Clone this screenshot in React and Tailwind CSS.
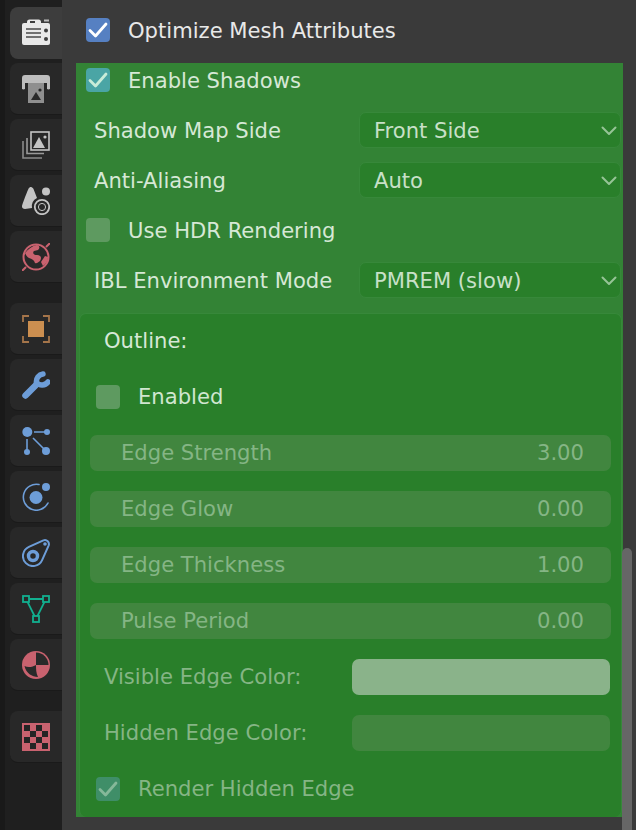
const ICON_GRAY = "#c4c4c4";
const BLUE = "#6d9dd8";
const RED = "#c9626f";

function Tab({ active, children, className = "" }) {
  return (
    <div className={`w-[52px] h-[52px] shrink-0 rounded-l-[8px] flex items-center pl-[12px] ${active ? "bg-[#3d3d3d]" : "bg-[#282828] border-b border-[#1a1a1a]"} ${className}`}>
      <svg width="28" height="28" viewBox="0 0 28 28" fill="none">{children}</svg>
    </div>
  );
}

function Check({ color, tick = "#ffffff" }) {
  return (
    <div className="w-[24px] h-[24px] rounded-[4px] shrink-0" style={{ backgroundColor: color }}>
      {tick && (
        <svg width="24" height="24" viewBox="0 0 24 24" fill="none">
          <path d="M4 12.500l5.500 5.500L20 6" stroke={tick} strokeWidth="2.800" strokeLinecap="round" strokeLinejoin="round" />
        </svg>
      )}
    </div>
  );
}

function Select({ label }) {
  return (
    <div className="w-[262px] h-[36px] rounded-[7px] bg-[#297f2a] border border-[#37883a] flex items-center justify-between pl-[14px] pr-[3px] text-[#c8e0c8]">
      <span className="pt-[1px]">{label}</span>
      <svg width="16" height="16" viewBox="0 0 16 16" fill="none">
        <path d="M1.500 5.500L8 12l6.500-6.500" stroke="#96c496" strokeWidth="2" strokeLinecap="round" strokeLinejoin="round" />
      </svg>
    </div>
  );
}

function Prop({ label, value }) {
  return (
    <div className="flex items-center h-[36px] pl-[18px] pr-[2px] justify-between">
      <span className="text-[#d6e8d6] pt-[1px]">{label}</span>
      <Select label={value} />
    </div>
  );
}

function NumField({ label, value }) {
  return (
    <div className="h-[36px] mx-[10px] rounded-[7px] bg-[#41863f] flex items-center justify-between pl-[31px] pr-[27px] text-[#85b585]">
      <span>{label}</span>
      <span>{value}</span>
    </div>
  );
}

function ColorRow({ label, swatch }) {
  return (
    <div className="h-[36px] flex items-center justify-between pl-[24px] pr-[11px]">
      <span className="text-[#85b585]">{label}</span>
      <div className={`w-[258px] h-[36px] rounded-[7px] ${swatch}`} />
    </div>
  );
}

export default function App() {
  return (
    <div className="w-[636px] h-[830px] flex overflow-hidden bg-[#3a3a3a] text-[21.12px] leading-none" style={{ fontFamily: '"DejaVu Sans", sans-serif' }}>
      <div className="w-[62px] shrink-0 h-full bg-[#1f1f1f] border-l-[5px] border-[#191919] pl-[5px] pt-[7px] flex flex-col gap-[4px]">
        <Tab active>
          <rect x="0" y="4" width="28" height="22" rx="2" fill="#e8e8e8" />
          <rect x="5" y="0.5" width="14" height="6" rx="2.5" fill="#e8e8e8" />
          <rect x="22" y="0.5" width="5" height="2" fill="#bbbbbb" />
          <rect x="8" y="2" width="5" height="2" fill="#3d3d3d" />
          <rect x="4" y="9" width="15" height="2" fill="#707070" />
          <rect x="4" y="13" width="15" height="2" fill="#707070" />
          <rect x="4" y="17" width="15" height="2" fill="#707070" />
          <circle cx="24" cy="11.5" r="2" fill="#3d3d3d" />
          <circle cx="24" cy="20" r="2" fill="#3d3d3d" />
        </Tab>
        <Tab>
          <path d="M3 0h22a3 3 0 0 1 3 3v11a3 3 0 0 1-3 0v-6H3v6a3 3 0 0 1-3 0V3a3 3 0 0 1 3-3z" fill="#bdbdbd" />
          <rect x="6" y="8" width="16" height="20" fill="#8f8f8f" />
          <path d="M9 25l5-8 5 8z" fill="#2a2a2a" />
          <circle cx="18" cy="15" r="1.6" fill="#2a2a2a" />
        </Tab>
        <Tab>
          <rect x="9" y="1" width="18" height="18" stroke={ICON_GRAY} strokeWidth="1.6" />
          <path d="M11 17l6-11 6 11z" fill={ICON_GRAY} />
          <circle cx="23" cy="6" r="1.6" fill={ICON_GRAY} />
          <path d="M5 7v15.500h17" stroke="#9a9a9a" strokeWidth="1.6" />
          <path d="M1 10v17h19" stroke="#8a8a8a" strokeWidth="1.6" />
        </Tab>
        <Tab>
          <path d="M9 0C10 0 11 1 11.500 2l3.500 9A9.500 9.500 0 0 0 10 21L3 22C1 22 0 21 0 19.500 0 18 6 2 7 1 7.500.5 8 0 9 0z" fill={ICON_GRAY} />
          <circle cx="24" cy="4.500" r="4" fill={ICON_GRAY} />
          <circle cx="20" cy="20" r="7.200" stroke={ICON_GRAY} strokeWidth="1.800" />
          <circle cx="20" cy="20" r="3.600" stroke={ICON_GRAY} strokeWidth="1" />
        </Tab>
        <Tab>
          <circle cx="14" cy="14" r="12.500" stroke={RED} strokeWidth="2" />
          <path d="M3 10c3-4 7-7 12-8 3 1 3 3 1 5l-4 1c-2 2 0 4 3 4 4 0 5 3 3 6-2 1-3 3-5 2-1-3-3-4-6-5-2-1-3-3-4-5z" fill={RED} />
          <path d="M19 19l4-6 3 1c0 4-2 7-5 9z" fill={RED} />
          <path d="M0 28l4-4M24 4l4-4" stroke={RED} strokeWidth="2" />
        </Tab>
        <Tab className="mt-[16px]">
          <rect x="6" y="6" width="16" height="16" fill="#cc8f50" />
          <path d="M1 7V1h6M21 1h6v6M27 21v6h-6M7 27H1v-6" stroke="#a5754a" strokeWidth="1.800" />
        </Tab>
        <Tab>
          <path d="M3.500 24.500L15 13" stroke={BLUE} strokeWidth="6.500" strokeLinecap="round" />
          <path d="M14.500 11.500A7.500 7.500 0 0 1 21 3M14.500 11.500A7.500 7.500 0 0 0 26 11" stroke={BLUE} strokeWidth="5.500" strokeLinecap="round" />
        </Tab>
        <Tab>
          <circle cx="5.300" cy="5" r="5" fill={BLUE} />
          <circle cx="25" cy="5" r="3" fill={BLUE} />
          <circle cx="5" cy="25" r="3" fill={BLUE} />
          <circle cx="24" cy="24" r="4" fill={BLUE} />
          <path d="M12 5h11M5 12v11M11 11l11 11" stroke={BLUE} strokeWidth="1.600" />
        </Tab>
        <Tab>
          <circle cx="14" cy="14.500" r="6.500" fill={BLUE} />
          <circle cx="24" cy="4" r="4" fill={BLUE} />
          <path d="M17 1.500A13 13 0 1 0 26 20" stroke={BLUE} strokeWidth="1.600" strokeLinecap="round" />
        </Tab>
        <Tab>
          <path d="M6.900 7.900L21.400 1.400A4 4 0 0 1 26.600 6.600L20.100 21.100A10 10 0 1 1 6.900 7.900Z" stroke={BLUE} strokeWidth="2" />
          <circle cx="11" cy="17" r="4.500" stroke={BLUE} strokeWidth="3.500" />
          <circle cx="23" cy="5" r="1.800" fill={BLUE} />
        </Tab>
        <Tab>
          <path d="M4 4h20L14 24z" stroke="#12b090" strokeWidth="1.800" />
          <rect x="1" y="1" width="6" height="6" fill="#282828" stroke="#12b090" strokeWidth="1.800" />
          <rect x="21" y="1" width="6" height="6" fill="#282828" stroke="#12b090" strokeWidth="1.800" />
          <rect x="11" y="21" width="6" height="6" fill="#282828" stroke="#12b090" strokeWidth="1.800" />
        </Tab>
        <Tab>
          <circle cx="14" cy="14" r="14" fill={RED} />
          <path d="M14 1.500A12.500 12.500 0 0 1 26.500 14L14 14z" fill="#2a2a2a" />
          <path d="M2.500 15C6 17 11 16 14 14C14 18 14 22 16 26C10 26 4 22 2.500 15z" fill="#2a2a2a" />
        </Tab>
        <Tab className="mt-[16px]">
          <rect x="0" y="0" width="28" height="28" fill={RED} />
          <path d="M2 2h6v6H2zM14 2h6v6h-6zM8 8h6v6H8zM20 8h6v6h-6zM2 14h6v6H2zM14 14h6v6h-6zM8 20h6v6H8zM20 20h6v6h-6z" fill="#242424" />
        </Tab>
      </div>

      <div className="relative flex-1 pl-[14px] pt-[5px]">
        <div className="h-[50px] flex items-center pl-[10px] gap-[18px] text-[#e8e8e8]">
          <Check color="#5680c2" />
          <span className="pt-[1px]">Optimize Mesh Attributes</span>
        </div>
        <div className="mt-[8px] w-[547px] h-[754px] bg-[#338335]">
          <div className="h-[34px] flex items-center pl-[10px] gap-[18px] mb-[15px] text-[#d6e8d6]">
            <Check color="#4aa5a5" tick="#c8ecd8" />
            <span className="pt-[1px]">Enable Shadows</span>
          </div>
          <div className="flex flex-col gap-[14px]">
            <Prop label="Shadow Map Side" value="Front Side" />
            <Prop label="Anti-Aliasing" value="Auto" />
            <div className="h-[36px] flex items-center pl-[10px] gap-[18px] text-[#d6e8d6]">
              <Check color="#5e9a60" tick={null} />
              <span className="pt-[1px]">Use HDR Rendering</span>
            </div>
            <Prop label="IBL Environment Mode" value="PMREM (slow)" />
          </div>
          <div className="mt-[15px] ml-[3px] mr-[1px] h-[504px] rounded-[7px] bg-[#297f2a] border-l border-r border-t border-[#37883a] pt-[9px] flex flex-col gap-[20px]">
            <div className="h-[36px] flex items-center pl-[24px] text-[#d6e8d6]">Outline:</div>
            <div className="h-[36px] flex items-center pl-[16px] gap-[18px] text-[#d0e6d0]">
              <Check color="#5e9a60" tick={null} />
              <span>Enabled</span>
            </div>
            <NumField label="Edge Strength" value="3.00" />
            <NumField label="Edge Glow" value="0.00" />
            <NumField label="Edge Thickness" value="1.00" />
            <NumField label="Pulse Period" value="0.00" />
            <ColorRow label="Visible Edge Color:" swatch="bg-[#8ab38a]" />
            <ColorRow label="Hidden Edge Color:" swatch="bg-[#41863f]" />
            <div className="h-[36px] flex items-center pl-[16px] gap-[18px] text-[#85b585]">
              <Check color="#3f8e68" tick="#85b899" />
              <span>Render Hidden Edge</span>
            </div>
          </div>
        </div>
        <div className="absolute right-[4px] top-[548px] bottom-0 w-[10px] rounded-t-[5px] bg-[#666666]" />
      </div>
    </div>
  );
}
